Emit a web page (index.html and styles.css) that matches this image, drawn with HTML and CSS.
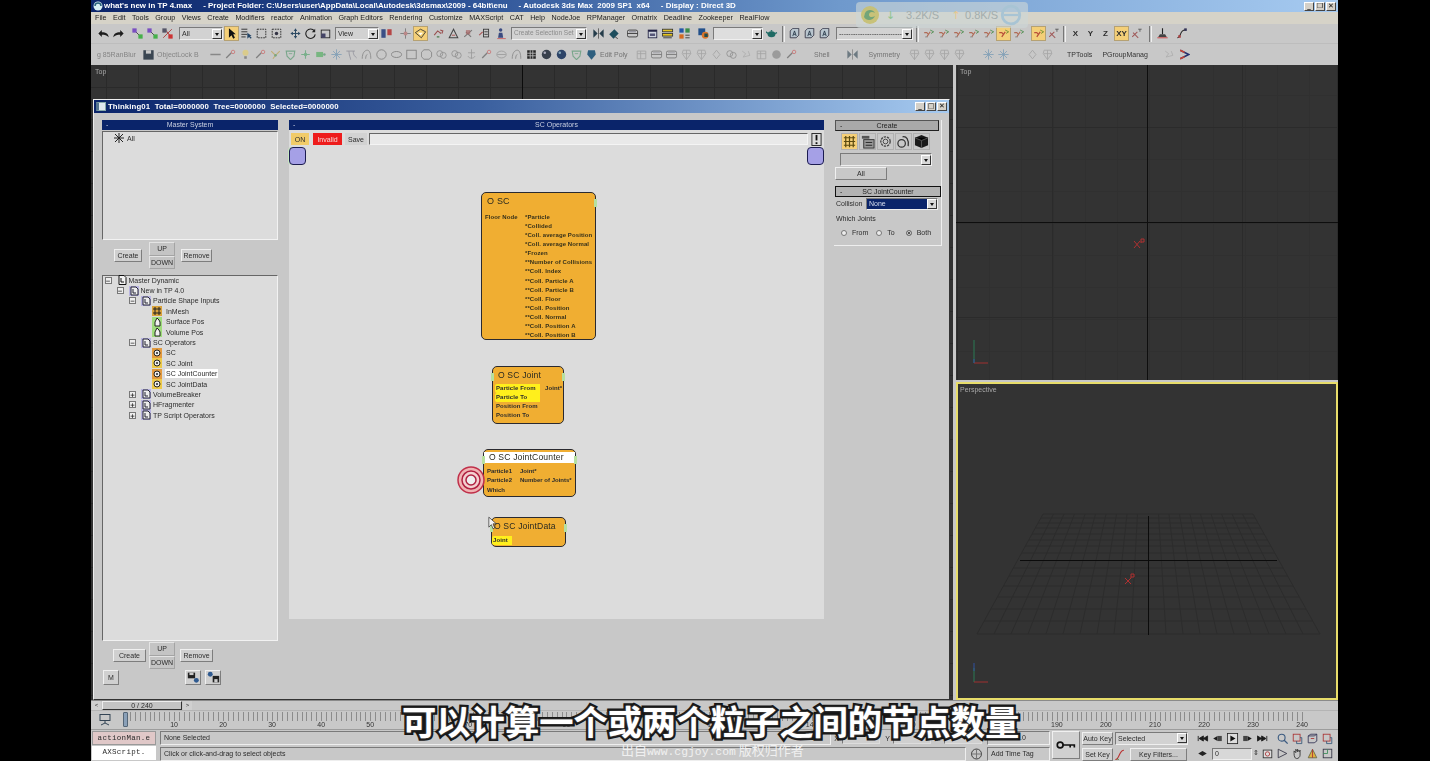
FILE: index.html
```html
<!DOCTYPE html>
<html lang="en">
<head>
<meta charset="utf-8">
<title>3ds Max - Thinking Particles</title>
<link rel="stylesheet" href="styles.css">
</head>
<body>
<svg class="defs" aria-hidden="true">
  <symbol id="undo" viewBox="0 0 14 14"><path d="M1 7 5 3v2.500c5 0 8 2 8 6-2-2.500-4.500-3-8-3V11Z" fill="#1c1c1c"/></symbol>
  <symbol id="redo" viewBox="0 0 14 14"><path d="M13 7 9 3v2.500c-5 0-8 2-8 6 2-2.500 4.500-3 8-3V11Z" fill="#1c1c1c"/></symbol>
  <symbol id="link" viewBox="0 0 14 14"><path d="M3 3l8 8" stroke="#333" fill="none"/><rect x="1" y="1" width="5" height="5" fill="#7a4fc0"/><rect x="8" y="8" width="5" height="5" fill="#46b04a"/></symbol>
  <symbol id="bind" viewBox="0 0 14 14"><path d="M2 12 12 2M4 2l8 10" stroke="#a33" fill="none"/><rect x="1" y="1" width="5" height="5" fill="#556"/><rect x="8" y="8" width="5" height="5" fill="#c33"/></symbol>
  <symbol id="arrow" viewBox="0 0 14 14"><path d="M4 1v11l3-3 2 4 2-1-2-4h3Z" fill="#111"/></symbol>
  <symbol id="names" viewBox="0 0 14 14"><path d="M1 2h7M1 5h7M1 8h7M1 11h5" stroke="#222"/><path d="M8 6v7l2-2 2 2 1-1-2-2h2Z" fill="#246"/></symbol>
  <symbol id="rect" viewBox="0 0 14 14"><rect x="2" y="2" width="10" height="10" fill="none" stroke="#222" stroke-dasharray="2 1"/></symbol>
  <symbol id="win" viewBox="0 0 14 14"><rect x="2" y="2" width="10" height="10" fill="none" stroke="#222" stroke-dasharray="2 1"/><circle cx="7" cy="7" r="2" fill="#334"/></symbol>
  <symbol id="move" viewBox="0 0 14 14"><path d="M7 1 5 4h1.400v2.400H4V5L1 7l3 2V7.600h2.400V10H5l2 3 2-3H7.600V7.600H10V9l3-2-3-2v1.400H7.600V4H9Z" fill="#2c4a63"/></symbol>
  <symbol id="rot" viewBox="0 0 14 14"><path d="M11.500 4A5.500 5.500 0 1 0 12.500 8" fill="none" stroke="#222" stroke-width="1.300"/><path d="M12.500 1.500v4h-4Z" fill="#222"/></symbol>
  <symbol id="scale" viewBox="0 0 14 14"><rect x="2" y="3" width="10" height="9" fill="none" stroke="#222"/><rect x="2" y="7" width="5" height="5" fill="#446"/></symbol>
  <symbol id="mir" viewBox="0 0 14 14"><rect x="1" y="2" width="5" height="10" fill="#3b4f86"/><rect x="8" y="2" width="5" height="7" fill="#b54646"/></symbol>
  <symbol id="snap" viewBox="0 0 14 14"><path d="M7 1v12M1 7h12" stroke="#777"/><path d="M5 5h4v4H5Z" fill="#b88"/></symbol>
  <symbol id="cubey" viewBox="0 0 14 14"><path d="M1 6 7 2l6 3-5 7Z" fill="#f5d070" stroke="#333"/><path d="M4 6h6L7 9Z" fill="#fff"/></symbol>
  <symbol id="red1" viewBox="0 0 14 14"><path d="M2 9 6 4l4 3M9 3l3 1-1 3" fill="none" stroke="#9a5050" stroke-width="1.300"/><path d="M5 11h3" stroke="#4a7a4a" stroke-width="1.500"/></symbol>
  <symbol id="red2" viewBox="0 0 14 14"><path d="M7 2 2 12h10Z" fill="none" stroke="#444" stroke-width="1.200"/><path d="M5 9h4" stroke="#a44"/></symbol>
  <symbol id="red3" viewBox="0 0 14 14"><path d="M2 11 11 3M4 5l6 6" stroke="#777" stroke-width="1.300"/><rect x="4" y="3" width="5" height="5" fill="#a66" opacity=".7"/></symbol>
  <symbol id="bars" viewBox="0 0 14 14"><path d="M2 9 6 5" stroke="#a55" stroke-width="1.300"/><rect x="7" y="2" width="6" height="9" fill="none" stroke="#333"/><path d="M8 5h4M8 8h4" stroke="#333"/></symbol>
  <symbol id="person" viewBox="0 0 14 14"><circle cx="6" cy="3" r="2" fill="#3a4a80"/><path d="M3 12 4 6h4l1 6Z" fill="#3a4a80"/><path d="M2 13h10" stroke="#c55"/></symbol>
  <symbol id="mirror" viewBox="0 0 14 14"><path d="M1 2v10l5-5ZM13 2v10L8 7Z" fill="#243c4a"/><path d="M7 1v12" stroke="#555"/></symbol>
  <symbol id="align" viewBox="0 0 14 14"><path d="M2 8 8 2l5 5-6 6Z" fill="#1d4d5d"/><path d="M9 11l3 2" stroke="#333"/></symbol>
  <symbol id="layer" viewBox="0 0 14 14"><rect x="1" y="3" width="12" height="8" fill="none" stroke="#333" rx="2"/><path d="M1 7h12" stroke="#333"/><path d="M3 5h8" stroke="#778"/></symbol>
  <symbol id="graph" viewBox="0 0 14 14"><rect x="2" y="3" width="10" height="9" fill="#cfd4de" stroke="#224"/><path d="M2 3h10v2H2Z" fill="#224"/><path d="M4 7h6v3H4Z" fill="#557"/></symbol>
  <symbol id="yellowb" viewBox="0 0 14 14"><rect x="1" y="2" width="12" height="3" fill="#e5c420" stroke="#333"/><rect x="1" y="7" width="12" height="3" fill="#e5c420" stroke="#333"/><path d="M2 12h10" stroke="#333"/></symbol>
  <symbol id="mat" viewBox="0 0 14 14"><rect x="1" y="1" width="5" height="5" fill="#2356a8"/><rect x="8" y="1" width="5" height="5" fill="#3a8c4a"/><rect x="1" y="8" width="5" height="5" fill="#d46a20"/><path d="M8 9h5M8 12h5" stroke="#333"/></symbol>
  <symbol id="render" viewBox="0 0 14 14"><rect x="1" y="1" width="8" height="8" fill="#22508a"/><circle cx="9" cy="9" r="4" fill="#d9742a"/><path d="M8 7h4v4H8Z" fill="#244c4a"/></symbol>
  <symbol id="teapot" viewBox="0 0 14 14"><ellipse cx="7" cy="8" rx="4.500" ry="3.500" fill="#1f6a64"/><path d="M3 7 .5 5M11 7l2.500-1" stroke="#1f6a64" stroke-width="1.500"/><circle cx="7" cy="3.800" r="1" fill="#1f6a64"/></symbol>
  <symbol id="tA" viewBox="0 0 14 14"><path d="M2 12V4l3-3h7v8l-3 3Z" fill="#b9c6cf" stroke="#334"/><path d="M5 10 7 4l2 6M6 8h2" stroke="#234" fill="none"/></symbol>
  <symbol id="axr" viewBox="0 0 14 14"><path d="M2 6h3l2 2M5 11l4-6" stroke="#b06a55" stroke-width="1.300" fill="none"/><path d="M9 3l4 2-3 2" stroke="#4a8a4a" fill="none"/><path d="M3 11h3" stroke="#888"/></symbol>
  <symbol id="axh" viewBox="0 0 14 14"><path d="M2 6h3l2 2M5 11l4-6" stroke="#b8503a" stroke-width="1.500" fill="none"/><path d="M9 3l4 2-3 2" stroke="#6a8a2a" fill="none"/></symbol>
  <symbol id="axy" viewBox="0 0 14 14"><path d="M2 11 8 5M3 6l6 6" stroke="#a05a5a" stroke-width="1.200"/><path d="M9 2h4M11 2v3" stroke="#555"/></symbol>
  <symbol id="fork" viewBox="0 0 14 14"><path d="M7 1v7" stroke="#222" stroke-width="1.300"/><path d="M4 8h6l2 3H2Z" fill="#444"/><path d="M1 12h12" stroke="#c33"/></symbol>
  <symbol id="curve" viewBox="0 0 14 14"><path d="M1 12c5 0 2-9 9-9" fill="none" stroke="#222" stroke-width="1.200"/><rect x="9" y="1" width="3" height="3" fill="#335"/><rect x="2" y="9" width="3" height="3" fill="#a44"/></symbol>
  <symbol id="save" viewBox="0 0 14 14"><rect x="1" y="2" width="12" height="11" fill="#3b4652"/><rect x="4" y="2" width="6" height="4" fill="#c8c8c8"/></symbol>
  <symbol id="dash" viewBox="0 0 14 14"><path d="M1 7h12" stroke="#555" stroke-width="1.500"/></symbol>
  <symbol id="tool" viewBox="0 0 14 14"><path d="M2 11 8 5" stroke="#444" stroke-width="1.500"/><circle cx="10" cy="4" r="2" fill="none" stroke="#c33"/></symbol>
  <symbol id="bulb" viewBox="0 0 14 14"><circle cx="7" cy="5" r="3.500" fill="#e9cf5a"/><rect x="5.500" y="9" width="3" height="3" fill="#555"/></symbol>
  <symbol id="ky" viewBox="0 0 14 14"><path d="M2 3l5 5-3 4M12 3 7 8" stroke="#b99a30" stroke-width="1.300" fill="none"/><circle cx="7" cy="8" r="1.500" fill="#3a8c4a"/></symbol>
  <symbol id="shield" viewBox="0 0 14 14"><path d="M2 3h10l-1 6-4 4-4-4Z" fill="none" stroke="#3a8c5a" stroke-width="1.300"/><path d="M5 6h4" stroke="#3a8c5a"/></symbol>
  <symbol id="grn" viewBox="0 0 14 14"><path d="M7 2v10M2 7h10" stroke="#3a9c5a" stroke-width="1.300"/><circle cx="7" cy="7" r="2" fill="#3a9c5a"/></symbol>
  <symbol id="cam" viewBox="0 0 14 14"><rect x="2" y="4" width="8" height="6" fill="#38a848"/><circle cx="11.500" cy="7" r="1.500" fill="#385"/></symbol>
  <symbol id="spk" viewBox="0 0 14 14"><path d="M7 1v12M1 7h12M3 3l8 8M11 3l-8 8" stroke="#4a80a8"/></symbol>
  <symbol id="coil" viewBox="0 0 14 14"><path d="M1 3h10M4 3c0 5 2 8 2 10M9 3c0 5 2 6 4 8" fill="none" stroke="#667"/></symbol>
  <symbol id="arc" viewBox="0 0 14 14"><path d="M2 12C2 5 5 2 8 2s4 5 4 10M6 12c0-3 1-5 2-5" fill="none" stroke="#555"/></symbol>
  <symbol id="circ" viewBox="0 0 14 14"><circle cx="7" cy="7" r="5.500" fill="none" stroke="#444"/></symbol>
  <symbol id="oval" viewBox="0 0 14 14"><ellipse cx="7" cy="7" rx="6" ry="3.500" fill="none" stroke="#444"/></symbol>
  <symbol id="sq" viewBox="0 0 14 14"><rect x="1.500" y="2" width="11" height="10" fill="none" stroke="#444"/></symbol>
  <symbol id="oct" viewBox="0 0 14 14"><path d="M4 1.500h6l3 3v5l-3 3H4l-3-3v-5Z" fill="none" stroke="#444"/></symbol>
  <symbol id="twin" viewBox="0 0 14 14"><circle cx="5" cy="6" r="3.500" fill="none" stroke="#666"/><circle cx="9" cy="8" r="3.500" fill="none" stroke="#666"/></symbol>
  <symbol id="anchor" viewBox="0 0 14 14"><path d="M7 1v11M3 5h8M3 9c1 3 7 3 8 0" fill="none" stroke="#777"/></symbol>
  <symbol id="ell" viewBox="0 0 14 14"><ellipse cx="7" cy="7" rx="5.500" ry="4" fill="none" stroke="#777"/><path d="M2 7h10" stroke="#777"/></symbol>
  <symbol id="cgrid" viewBox="0 0 14 14"><path d="M2 2h10v10H2Z" fill="#252525"/><path d="M2 5.500h10M2 8.500h10M5.500 2v10M8.500 2v10" stroke="#bbb"/></symbol>
  <symbol id="ball" viewBox="0 0 14 14"><circle cx="7" cy="7" r="5.500" fill="#38404c"/><circle cx="5" cy="5" r="1.500" fill="#aab"/></symbol>
  <symbol id="ballb" viewBox="0 0 14 14"><circle cx="7" cy="7" r="5.500" fill="#2d4468"/><circle cx="5" cy="5" r="1.500" fill="#8ab"/></symbol>
  <symbol id="teal" viewBox="0 0 14 14"><path d="M3 2h8l1 5-5 6-5-6Z" fill="#2e5f7f"/></symbol>
  <symbol id="cbox" viewBox="0 0 14 14"><path d="M2 3h10v9H2Z" fill="none" stroke="#888"/><path d="M2 6h10M6 3v9" stroke="#888"/></symbol>
  <symbol id="sphere" viewBox="0 0 14 14"><circle cx="7" cy="7" r="5" fill="#777"/></symbol>
  <symbol id="cone" viewBox="0 0 14 14"><path d="M7 2 3 7l4 5 4-5Z" fill="none" stroke="#888"/></symbol>
  <symbol id="ymov" viewBox="0 0 14 14"><path d="M3 2h8l1 4-5 7-5-7Z" fill="none" stroke="#8a8a8a"/><path d="M3 6h9M7 2v11" stroke="#8a8a8a"/></symbol>
  <symbol id="wave" viewBox="0 0 14 14"><path d="M2 3l4 3-3 4 8-2-2-5" stroke="#999" fill="none"/></symbol>
  <symbol id="chev" viewBox="0 0 14 14"><path d="M2 2 12 7 2 12" fill="none" stroke="#23306e" stroke-width="1.800"/><path d="M2 2 7 4.500M2 12l5-2.500" stroke="#c43" stroke-width="1.800"/></symbol>
  <symbol id="first" viewBox="0 0 14 14"><path d="M2 4v6M8 4 3 7l5 3ZM13 4 8 7l5 3Z" fill="#1b1b1b" stroke="#1b1b1b"/></symbol>
  <symbol id="prev" viewBox="0 0 14 14"><path d="M7 4 2 7l5 3Z" fill="#1b1b1b"/><rect x="7" y="4" width="5" height="6" fill="#444"/></symbol>
  <symbol id="next" viewBox="0 0 14 14"><path d="M7 4l5 3-5 3Z" fill="#1b1b1b"/><rect x="2" y="4" width="5" height="6" fill="#444"/></symbol>
  <symbol id="last" viewBox="0 0 14 14"><path d="M12 4v6M6 4l5 3-5 3ZM1 4l5 3-5 3Z" fill="#1b1b1b" stroke="#1b1b1b"/></symbol>
  <symbol id="play" viewBox="0 0 14 14"><rect x="1" y="1" width="12" height="12" fill="#ddd" stroke="#222"/><path d="M4.500 3.500v7l6-3.500Z" fill="#111"/></symbol>
  <symbol id="keym" viewBox="0 0 14 14"><path d="M7 4 2 7l5 3ZM7 4l5 3-5 3Z" fill="#222"/></symbol>
  <symbol id="cfg" viewBox="0 0 14 14"><rect x="2" y="3" width="10" height="9" fill="#ddd" stroke="#333"/><circle cx="7" cy="7.500" r="2.500" fill="none" stroke="#a33"/></symbol>
  <symbol id="zoom" viewBox="0 0 14 14"><circle cx="6" cy="6" r="4" fill="none" stroke="#3a5a80" stroke-width="1.300"/><path d="m9 9 4 4" stroke="#3a5a80" stroke-width="1.500"/></symbol>
  <symbol id="vbr" viewBox="0 0 14 14"><rect x="2" y="2" width="8" height="8" fill="none" stroke="#a33"/><path d="M6 10v3h6V6h-2" fill="none" stroke="#357"/></symbol>
  <symbol id="vbc" viewBox="0 0 14 14"><path d="M2 4h7l3-2v8l-3 2H2Z" fill="none" stroke="#335"/><path d="M2 4l3-2h7" stroke="#335" fill="none"/><path d="M5 7h4" stroke="#a33"/></symbol>
  <symbol id="fov" viewBox="0 0 14 14"><path d="M2 2 12 7 2 12Z" fill="none" stroke="#334"/></symbol>
  <symbol id="hand" viewBox="0 0 14 14"><path d="M3 7V4l2 2V2l2 3V2l2 3 1-2v6c0 2-2 4-4 4S3 10 3 7Z" fill="none" stroke="#333"/></symbol>
  <symbol id="orb" viewBox="0 0 14 14"><path d="M7 2 2 12h10Z" fill="#e0b040" stroke="#664"/><path d="M7 2v10" stroke="#a33"/></symbol>
  <symbol id="maxv" viewBox="0 0 14 14"><rect x="2" y="2" width="10" height="10" fill="none" stroke="#334"/><path d="M2 7h5V2" fill="none" stroke="#3a8c5a"/></symbol>
  <symbol id="key" viewBox="0 0 24 12"><circle cx="5" cy="6" r="3.500" fill="none" stroke="#111" stroke-width="2"/><path d="M8 6h14v3M17 6v3" fill="none" stroke="#111" stroke-width="2"/></symbol>
  <symbol id="lock" viewBox="0 0 14 14"><circle cx="7" cy="7" r="5" fill="none" stroke="#444"/><path d="M7 2v10M2 7h10" stroke="#777"/></symbol>
  <symbol id="fcurve" viewBox="0 0 14 14"><path d="M1 13c5 0 4-11 10-11" fill="none" stroke="#b33" stroke-width="1.300"/><path d="M3 12l2 1" stroke="#383"/></symbol>
  <symbol id="monitor" viewBox="0 0 14 14"><rect x="2" y="1.500" width="10" height="6" fill="none" stroke="#345"/><path d="M7 8v2M3 12l4-2 4 2" stroke="#345" fill="none"/></symbol>
  <symbol id="tdoc" viewBox="0 0 10 10"><rect width="10" height="10" fill="#b8b4e0"/><path d="M2 1h5l2 2v6H2Z" fill="#eee" stroke="#223"/><path d="M4 3v4h3" stroke="#223" fill="none"/></symbol>
  <symbol id="troot" viewBox="0 0 10 10"><path d="M2 .5h5l2 2v7H2Z" fill="#f2f2f2" stroke="#111"/><path d="M4 3v4h3" stroke="#111" fill="none"/></symbol>
  <symbol id="tgear" viewBox="0 0 10 10"><rect width="10" height="10" fill="#ecc94a"/><circle cx="5" cy="5" r="3" fill="#eee" stroke="#222"/><circle cx="5" cy="5" r="1" fill="#222"/></symbol>
  <symbol id="tgearo" viewBox="0 0 10 10"><rect width="10" height="10" fill="#e39a3e"/><circle cx="5" cy="5" r="3" fill="#eee" stroke="#222"/><circle cx="5" cy="5" r="1" fill="#222"/></symbol>
  <symbol id="thand" viewBox="0 0 10 10"><rect width="10" height="10" fill="#9fdc7c"/><path d="M3 9V5l2-4 2 2 1 2v4Z" fill="#f2f2f2" stroke="#222"/></symbol>
  <symbol id="tmesh" viewBox="0 0 10 10"><rect width="10" height="10" fill="#d9a23c"/><path d="M1 3h8M1 7h8M3 1v8M7 1v8" stroke="#222"/></symbol>
  <symbol id="cmesh" viewBox="0 0 16 16"><path d="M4 2v12M8 2v12M12 2v12M2 4h12M2 8h12M2 12h12" stroke="#5a4a10" stroke-width="1.300"/></symbol>
  <symbol id="cok" viewBox="0 0 16 16"><path d="M2 2h8v3H2Z" fill="#555"/><rect x="4" y="6" width="11" height="9" fill="#999" stroke="#333"/><path d="M6 9h7M6 12h7" stroke="#222"/></symbol>
  <symbol id="cgear" viewBox="0 0 16 16"><circle cx="8" cy="8" r="5" fill="none" stroke="#444" stroke-width="1.400" stroke-dasharray="2.500 1"/><circle cx="8" cy="8" r="2.500" fill="none" stroke="#444"/></symbol>
  <symbol id="cmag" viewBox="0 0 16 16"><circle cx="6" cy="10" r="4" fill="none" stroke="#333" stroke-width="1.300"/><path d="M7 3c4-1 7 3 6 10" fill="none" stroke="#333" stroke-width="1.300"/></symbol>
  <symbol id="ccube" viewBox="0 0 16 16"><path d="M8 1 15 4v8l-7 3-7-3V4Z" fill="#1a1a1a"/><path d="M1 4l7 3 7-3M8 7v8" stroke="#555"/></symbol>
  <symbol id="floppyb" viewBox="0 0 16 16"><rect x="1" y="2" width="9" height="7" fill="#222"/><rect x="3" y="2" width="5" height="3" fill="#ccc"/><circle cx="11.500" cy="11.500" r="3" fill="#2f5a90"/></symbol>
  <symbol id="floppya" viewBox="0 0 16 16"><circle cx="4" cy="4" r="3" fill="#2f5a90"/><rect x="7" y="6" width="8" height="8" fill="#222"/><rect x="9" y="10" width="4" height="4" fill="#ccc"/></symbol>
  <symbol id="bang" viewBox="0 0 12 14"><rect x="1" y="0.500" width="10" height="13" fill="#ddd" stroke="#222"/><path d="M6 2v6" stroke="#111" stroke-width="2"/><rect x="5" y="10" width="2" height="2" fill="#111"/></symbol>
</svg>

<div class="app">
  <header class="title">
    <svg class="ttl-ico" viewBox="0 0 10 10"><circle cx="5" cy="5" r="4.500" fill="#d8f0f4"/><path d="M2 5a3 3 0 0 1 6 0" fill="none" stroke="#26607a" stroke-width="1.500"/></svg>
    <span class="ttl-text">what's new in TP 4.max &nbsp;&nbsp;&nbsp; - Project Folder: C:\Users\user\AppData\Local\Autodesk\3dsmax\2009 - 64bit\enu &nbsp;&nbsp;&nbsp; - Autodesk 3ds Max &nbsp;2009 SP1 &nbsp;x64 &nbsp;&nbsp;&nbsp; - Display : Direct 3D</span>
    <div class="wbtns"><b>_</b><b>❐</b><b>✕</b></div>
  </header>
  <nav class="menu">
    <span>File</span><span>Edit</span><span>Tools</span><span>Group</span><span>Views</span><span>Create</span><span>Modifiers</span><span>reactor</span><span>Animation</span><span>Graph Editors</span><span>Rendering</span><span>Customize</span><span>MAXScript</span><span>CAT</span><span>Help</span><span>NodeJoe</span><span>RPManager</span><span>Ornatrix</span><span>Deadline</span><span>Zookeeper</span><span>RealFlow</span>
  </nav>

  <div class="tb tb1">
    <svg class="ic"><use href="#undo"/></svg><svg class="ic"><use href="#redo"/></svg>
    <svg class="ic g4"><use href="#link"/></svg><svg class="ic"><use href="#link"/></svg><svg class="ic"><use href="#bind"/></svg>
    <div class="dd g4 w44"><span>All</span><i></i></div>
    <svg class="ic g1 on"><use href="#arrow"/></svg><svg class="ic"><use href="#names"/></svg><svg class="ic"><use href="#rect"/></svg><svg class="ic"><use href="#win"/></svg>
    <svg class="ic g4"><use href="#move"/></svg><svg class="ic"><use href="#rot"/></svg><svg class="ic"><use href="#scale"/></svg>
    <div class="dd g2 w44"><span>View</span><i></i></div>
    <svg class="ic"><use href="#mir"/></svg>
    <svg class="ic g4"><use href="#snap"/></svg><svg class="ic on"><use href="#cubey"/></svg>
    <svg class="ic g3"><use href="#red1"/></svg><svg class="ic"><use href="#red2"/></svg><svg class="ic"><use href="#red3"/></svg><svg class="ic"><use href="#bars"/></svg>
    <svg class="ic g3"><use href="#person"/></svg>
    <div class="dd g2 w76 faded"><span>Create Selection Set</span><i></i></div>
    <svg class="ic g4"><use href="#mirror"/></svg><svg class="ic"><use href="#align"/></svg>
    <svg class="ic g4"><use href="#layer"/></svg>
    <svg class="ic g5"><use href="#graph"/></svg><svg class="ic"><use href="#yellowb"/></svg>
    <svg class="ic g2"><use href="#mat"/></svg>
    <svg class="ic g4"><use href="#render"/></svg>
    <div class="dd g2 w50 blank"><span></span><i></i></div>
    <svg class="ic g1"><use href="#teapot"/></svg>
    <i class="grip g3"></i><svg class="ic g2"><use href="#tA"/></svg><svg class="ic"><use href="#tA"/></svg><svg class="ic"><use href="#tA"/></svg>
    <div class="dd g4 w77"><span>---------------------------</span><i></i></div>
    <i class="grip g3"></i><svg class="ic g2"><use href="#axr"/></svg><svg class="ic"><use href="#axr"/></svg><svg class="ic"><use href="#axr"/></svg><svg class="ic"><use href="#axr"/></svg><svg class="ic"><use href="#axr"/></svg><svg class="ic on"><use href="#axh"/></svg><svg class="ic"><use href="#axr"/></svg>
    <svg class="ic g5 on"><use href="#axh"/></svg><svg class="ic"><use href="#axy"/></svg>
    <i class="grip g2"></i><span class="axis g2">X</span><span class="axis">Y</span><span class="axis">Z</span><span class="axis on g1">XY</span><svg class="ic"><use href="#axy"/></svg>
    <i class="grip g5"></i><svg class="ic g3"><use href="#fork"/></svg><svg class="ic g5"><use href="#curve"/></svg>
  </div>

  <div class="tb tb2">
    <span class="tl t-a">g 85RanBlur</span>
    <svg class="ic solid"><use href="#save"/></svg>
    <span class="tl t-b">ObjectLock B</span>
    <svg class="ic"><use href="#dash"/></svg><svg class="ic"><use href="#tool"/></svg><svg class="ic"><use href="#bulb"/></svg><svg class="ic"><use href="#tool"/></svg><svg class="ic"><use href="#ky"/></svg><svg class="ic"><use href="#shield"/></svg><svg class="ic"><use href="#grn"/></svg><svg class="ic"><use href="#cam"/></svg><svg class="ic g1"><use href="#spk"/></svg><svg class="ic"><use href="#coil"/></svg><svg class="ic"><use href="#arc"/></svg><svg class="ic"><use href="#circ"/></svg><svg class="ic"><use href="#oval"/></svg><svg class="ic"><use href="#sq"/></svg><svg class="ic"><use href="#oct"/></svg><svg class="ic"><use href="#twin"/></svg><svg class="ic"><use href="#twin"/></svg><svg class="ic"><use href="#anchor"/></svg><svg class="ic"><use href="#tool"/></svg><svg class="ic"><use href="#ell"/></svg><svg class="ic"><use href="#arc"/></svg>
    <svg class="ic solid"><use href="#cgrid"/></svg><svg class="ic solid"><use href="#ball"/></svg><svg class="ic solid"><use href="#ballb"/></svg><svg class="ic"><use href="#shield"/></svg><svg class="ic solid"><use href="#teal"/></svg>
    <span class="tl t-c">Edit Poly</span>
    <svg class="ic"><use href="#cbox"/></svg><svg class="ic"><use href="#layer"/></svg><svg class="ic"><use href="#layer"/></svg><svg class="ic"><use href="#ymov"/></svg><svg class="ic"><use href="#ymov"/></svg><svg class="ic"><use href="#cone"/></svg><svg class="ic"><use href="#twin"/></svg><svg class="ic"><use href="#wave"/></svg><svg class="ic"><use href="#cbox"/></svg><svg class="ic"><use href="#sphere"/></svg><svg class="ic"><use href="#tool"/></svg>
    <span class="tl t-d">Shell</span>
    <svg class="ic"><use href="#mirror"/></svg>
    <span class="tl t-e">Symmetry</span>
    <svg class="ic"><use href="#ymov"/></svg><svg class="ic"><use href="#ymov"/></svg><svg class="ic"><use href="#ymov"/></svg><svg class="ic"><use href="#ymov"/></svg>
    <svg class="ic g14"><use href="#spk"/></svg><svg class="ic"><use href="#spk"/></svg>
    <svg class="ic g14"><use href="#cone"/></svg><svg class="ic"><use href="#ymov"/></svg>
    <span class="tl t-f">TPTools</span><span class="tl t-g">PGroupManag</span>
    <svg class="ic g14"><use href="#wave"/></svg><svg class="ic solid"><use href="#chev"/></svg>
  </div>

  <main class="views">
    <section class="vp vp-main">
      <span class="vp-label">Top</span>
      <article class="win">
        <header class="win-title">
          <span class="win-ico"></span>
          <span>Thinking01 &nbsp;Total=0000000 &nbsp;Tree=0000000 &nbsp;Selected=0000000</span>
          <div class="wbtns"><b>_</b><b>□</b><b>✕</b></div>
        </header>
        <div class="win-body">
          <div class="col-l">
            <div class="navy"><b>-</b><span>Master System</span></div>
            <div class="list sys">
              <div class="row lv1"><svg class="star" viewBox="0 0 10 10"><path d="M5 0v10M0 5h10M1 1l8 8M9 1l-8 8" stroke="#222" fill="none"/></svg><span>All</span></div>
            </div>
            <div class="btngrp">
              <button class="btn bw28">Create</button>
              <div class="updown"><button class="btn flat">UP</button><button class="btn flat">DOWN</button></div>
              <button class="btn bw31">Remove</button>
            </div>
            <div class="list tree">
              <div class="row l0"><i class="ex">−</i><svg class="ti"><use href="#troot"/></svg><span>Master Dynamic</span></div>
              <div class="row l1"><i class="ex">−</i><svg class="ti"><use href="#tdoc"/></svg><span>New in TP 4.0</span></div>
              <div class="row l2"><i class="ex">−</i><svg class="ti"><use href="#tdoc"/></svg><span>Particle Shape Inputs</span></div>
              <div class="row leaf"><svg class="ti"><use href="#tmesh"/></svg><span>InMesh</span></div>
              <div class="row leaf"><svg class="ti"><use href="#thand"/></svg><span>Surface Pos</span></div>
              <div class="row leaf"><svg class="ti"><use href="#thand"/></svg><span>Volume Pos</span></div>
              <div class="row l2"><i class="ex">−</i><svg class="ti"><use href="#tdoc"/></svg><span>SC Operators</span></div>
              <div class="row leaf"><svg class="ti"><use href="#tgearo"/></svg><span>SC</span></div>
              <div class="row leaf"><svg class="ti"><use href="#tgear"/></svg><span>SC Joint</span></div>
              <div class="row leaf"><svg class="ti"><use href="#tgearo"/></svg><span class="sel">SC JointCounter</span></div>
              <div class="row leaf"><svg class="ti"><use href="#tgear"/></svg><span>SC JointData</span></div>
              <div class="row l2"><i class="ex">+</i><svg class="ti"><use href="#tdoc"/></svg><span>VolumeBreaker</span></div>
              <div class="row l2"><i class="ex">+</i><svg class="ti"><use href="#tdoc"/></svg><span>HFragmenter</span></div>
              <div class="row l2"><i class="ex">+</i><svg class="ti"><use href="#tdoc"/></svg><span>TP Script Operators</span></div>
            </div>
            <div class="btngrp grp2">
              <button class="btn bw32">Create</button>
              <div class="updown"><button class="btn flat">UP</button><button class="btn flat">DOWN</button></div>
              <button class="btn bw32 r">Remove</button>
            </div>
            <div class="foot-tools">
              <button class="btn sq">M</button>
              <button class="btn sq s1"><svg class="fl"><use href="#floppyb"/></svg></button>
              <button class="btn sq s2"><svg class="fl"><use href="#floppya"/></svg></button>
            </div>
          </div>

          <div class="col-m">
            <div class="navy"><b>-</b><span>SC Operators</span></div>
            <div class="canvas">
              <div class="ctl">
                <button class="chip on">ON</button>
                <button class="chip bad">Invalid</button>
                <button class="chip">Save</button>
                <div class="ctl-in"></div>
                <svg class="bang"><use href="#bang"/></svg>
              </div>
              <div class="pnode pl"></div>
              <div class="pnode pr"></div>

              <div class="node n-sc">
                <div class="nh">O SC</div>
                <div class="sc-cols">
                  <div>Floor Node</div>
                  <div class="sc-list">
                    <div>*Particle</div><div>*Collided</div><div>*Coll. average Position</div><div>*Coll. average Normal</div><div>*Frozen</div><div>**Number of Collisions</div><div>**Coll. Index</div><div>**Coll. Particle A</div><div>**Coll. Particle B</div><div>**Coll. Floor</div><div>**Coll. Position</div><div>**Coll. Normal</div><div>**Coll. Position A</div><div>**Coll. Position B</div>
                  </div>
                </div>
              </div>

              <div class="node n-joint pin">
                <div class="nh">O SC Joint</div>
                <div class="nr"><span class="y">Particle From</span><span>Joint*</span></div>
                <div class="nr"><span class="y">Particle To</span></div>
                <div class="nr"><span class="p">Position From</span></div>
                <div class="nr"><span class="p">Position To</span></div>
              </div>

              <div class="node n-count pin">
                <div class="nh wh">O SC JointCounter</div>
                <div class="cr"><span>Particle1</span><span>Joint*</span></div>
                <div class="cr"><span>Particle2</span><span>Number of Joints*</span></div>
                <div class="cr"><span>Which</span></div>
              </div>

              <div class="node n-data pin">
                <div class="nh">O SC JointData</div>
                <div class="nr"><span class="y short">Joint</span></div>
              </div>

              <svg class="target" viewBox="0 0 28 28"><circle cx="14" cy="14" r="13" fill="#f0b4b4" stroke="#c0304a" stroke-width="1.500"/><circle cx="14" cy="14" r="9" fill="#f4d0d0" stroke="#b02040" stroke-width="1.500"/><circle cx="14" cy="14" r="5" fill="#eee" stroke="#b02040" stroke-width="1.500"/></svg>
              <svg class="cursor" viewBox="0 0 12 16"><path d="M1 1v12l3-3 2 5 2-1-2-5h4Z" fill="#f4f4f4" stroke="#222" stroke-width=".8"/></svg>
            </div>
          </div>

          <div class="col-r">
            <div class="roll-h"><b>-</b><span>Create</span></div>
            <div class="cmd-icons">
              <svg class="ci on"><use href="#cmesh"/></svg><svg class="ci"><use href="#cok"/></svg><svg class="ci"><use href="#cgear"/></svg><svg class="ci"><use href="#cmag"/></svg><svg class="ci"><use href="#ccube"/></svg>
            </div>
            <div class="dd dd-create"><span></span><i></i></div>
            <button class="btn all">All</button>
            <div class="roll-h dark"><b>-</b><span>SC JointCounter</span></div>
            <div class="coll"><span>Collision</span><div class="dd sel-dd"><span>None</span><i></i></div></div>
            <div class="which">Which Joints</div>
            <div class="radios">
              <label><i class="rd"></i>From</label><label><i class="rd"></i>To</label><label><i class="rd chk"></i>Both</label>
            </div>
          </div>
        </div>
      </article>
    </section>

    <div class="vp-col">
      <section class="vp vp-top">
        <span class="vp-label">Top</span>
        <svg class="scene" viewBox="956 65 382 315">
          <path d="M1147.500 65V380M956 222.500H1338" stroke="#0e0e0e" fill="none"/>
          <path d="M1134 248l6-7m-6 0 6 7" stroke="#b03030" fill="none"/><path d="M1141 243v-4h3v3h-3" stroke="#b03030" fill="none"/>
          <path d="M974 363v-23" stroke="#2a7a55"/><path d="M974 363h14" stroke="#a03030"/><path d="M974 363v-4" stroke="#3050a0"/>
        </svg>
      </section>
      <section class="vp vp-persp">
        <span class="vp-label">Perspective</span>
        <svg class="scene" viewBox="958 383 378 314">
          <path d="M1043 513H1253M1041 517H1255M1038 522H1258M1035 527H1261M1032 533H1264M1029 539H1268M1025 545H1271M1022 552H1275M1013 567H1283M1009 575H1288M1003 585H1293M997 596H1299M991 608H1306M984 620H1313M977 633H1320" stroke="#2c2c2c" fill="none"/>
          <path d="M1043 513L977 633M1053.500 513L994 633M1064 513L1011 633M1074.500 513L1028 633M1085 513L1046 633M1095.500 513L1063 633M1106 513L1080 633M1116.500 513L1097 633M1127 513L1114 633M1137.500 513L1131 633M1158.500 513L1166 633M1169 513L1183 633M1179.500 513L1200 633M1190 513L1217 633M1200.500 513L1234 633M1211 513L1251 633M1221.500 513L1269 633M1232 513L1286 633M1242.500 513L1303 633M1253 513L1320 633" stroke="#2c2c2c" fill="none"/>
          <path d="M1020 559.500H1277M1148.500 515V634" stroke="#0b0b0b" fill="none"/>
          <path d="M1125 583l6-6m-6 0 6 6" stroke="#b03030" fill="none"/><path d="M1131 577v-4h3v3h-3" stroke="#b03030" fill="none"/>
          <path d="M974 681v-14" stroke="#2a7a55"/><path d="M974 681h14" stroke="#a03030"/><path d="M974 670v-8" stroke="#3050a0"/>
        </svg>
      </section>
    </div>
  </main>

  <div class="slider">
    <button class="sbtn">&lt;</button>
    <div class="thumb">0 / 240</div>
    <button class="sbtn">&gt;</button>
  </div>
  <div class="ruler">
    <svg class="mon"><use href="#monitor"/></svg>
    <div class="ruler-main">
      <i class="cur"></i>
      <div class="ticks"></div>
      <div class="nums"><span>10</span><span>20</span><span>30</span><span>40</span><span>50</span><span>60</span><span>70</span><span>80</span><span>90</span><span>100</span><span>110</span><span>120</span><span>130</span><span>140</span><span>150</span><span>160</span><span>170</span><span>180</span><span>190</span><span>200</span><span>210</span><span>220</span><span>230</span><span>240</span></div>
    </div>
  </div>

  <footer class="status">
    <div class="scripts"><div class="sc1">actionMan.e</div><div class="sc2">AXScript.</div></div>
    <div class="stat">
      <div class="stat-row">
        <div class="field grow">None Selected</div>
        <span class="xyz">X</span><div class="coord"></div>
        <span class="xyz">Y</span><div class="coord"></div>
        <span class="xyz">Z</span><div class="coord"></div>
        <div class="field gridv">Grid = 10.0</div>
      </div>
      <div class="stat-row r2">
        <div class="field grow">Click or click-and-drag to select objects</div>
        <svg class="lock"><use href="#lock"/></svg>
        <div class="field gridv">Add Time Tag</div>
      </div>
    </div>
    <button class="btn keybtn"><svg class="keyi"><use href="#key"/></svg></button>
    <div class="akey">
      <div class="ak-row"><button class="btn ab">Auto Key</button><div class="dd ak-dd"><span>Selected</span><i></i></div></div>
      <div class="ak-row"><button class="btn ab">Set Key</button><svg class="ic"><use href="#fcurve"/></svg><button class="btn kf">Key Filters...</button></div>
    </div>
    <div class="trans">
      <div class="tr-row"><svg class="ic"><use href="#first"/></svg><svg class="ic"><use href="#prev"/></svg><svg class="ic"><use href="#play"/></svg><svg class="ic"><use href="#next"/></svg><svg class="ic"><use href="#last"/></svg></div>
      <div class="tr-row"><svg class="ic"><use href="#keym"/></svg><div class="frame">0</div><span class="spin">⇕</span><svg class="ic"><use href="#cfg"/></svg></div>
    </div>
    <div class="nav">
      <svg class="ic"><use href="#zoom"/></svg><svg class="ic"><use href="#vbr"/></svg><svg class="ic"><use href="#vbc"/></svg><svg class="ic"><use href="#vbr"/></svg>
      <svg class="ic"><use href="#fov"/></svg><svg class="ic"><use href="#hand"/></svg><svg class="ic"><use href="#orb"/></svg><svg class="ic"><use href="#maxv"/></svg>
    </div>
  </footer>
</div>

<div class="net">
  <svg class="net-logo" viewBox="0 0 20 20"><circle cx="10" cy="10" r="9" fill="#c8c070"/><path d="M5 8c2-4 8-4 10 0-3-2-6-1-6 2 0 2 3 3 6 1-2 5-9 5-11 1" fill="#6aa070"/></svg>
  <span class="ar-g">↓</span><span>3.2K/S</span><span class="ar-o">↑</span><span>0.8K/S</span>
  <svg class="net-e" viewBox="0 0 20 20"><circle cx="10" cy="10" r="8" fill="none" stroke="#a8c4d4" stroke-width="2.500"/><path d="M3 10h14" stroke="#a8c4d4" stroke-width="2"/></svg>
</div>
<div class="subtitle">可以计算一个或两个粒子之间的节点数量</div>
<div class="wm">出自<span>www.cgjoy.com</span> 版权归作者</div>
</body>
</html>
```
FILE: styles.css
```css
* { box-sizing: border-box; }
html, body { margin: 0; height: 761px; overflow: hidden; }
body { background: #000; font: 7px/1 "Liberation Sans", Arial, sans-serif; color: #2c2c2c; position: relative; }
.defs { display: none; }
button { font: inherit; color: inherit; padding: 0; margin: 0; white-space: nowrap; }

.app { width: 1247px; height: 761px; margin-left: 91px; background: #c8c8c8; display: flex; flex-direction: column; filter: blur(.35px); }

/* title + menu */
.title { height: 12px; flex: none; display: flex; align-items: center; padding-left: 2px; background: linear-gradient(90deg, #0a246a 0, #2e5397 30%, #6f99cc 60%, #a6caf0 100%); color: #fff; font-weight: 700; font-size: 7.950px; }
.ttl-ico { width: 10px; height: 10px; margin-right: 1px; }
.ttl-text { white-space: nowrap; }
.wbtns { margin-left: auto; display: flex; gap: 1px; padding-right: 2px; }
.wbtns b { width: 10px; height: 9px; background: #d4d0c8; border: 1px solid; border-color: #fff #444 #444 #fff; color: #111; font: 700 7px/7px "DejaVu Sans", sans-serif; text-align: center; overflow: hidden; }
.menu { height: 12px; flex: none; display: flex; gap: 6.500px; align-items: center; padding-left: 4px; background: #d6d3c8; font-size: 7.200px; color: #1b1b1b; }

/* toolbars */
.tb { height: 20px; flex: none; display: flex; align-items: center; background: #c8c8c8; white-space: nowrap; }
.tb1 { padding-left: 5px; border-bottom: 1px solid #bdbdbd; }
.tb2 { padding-left: 6px; }
.ic { width: 15px; height: 15px; padding: 1.500px; flex: none; display: block; }
.ic.on { background: #f4cf78; box-shadow: inset 0 0 0 1px #b5a173; }
.tb2 .ic { opacity: .55; }
.tb2 .ic.solid { opacity: 1; }
.g1 { margin-left: 1px; } .g2 { margin-left: 2px; } .g3 { margin-left: 3px; } .g4 { margin-left: 4px; } .g5 { margin-left: 5px; } .g14 { margin-left: 14px; }
.grip { width: 3px; height: 16px; flex: none; border-left: 1px solid #777; border-right: 1px solid #f0f0f0; }
.dd { height: 13px; display: flex; align-items: center; background: #d2d2d2; border: 1px solid; border-color: #7a7a7a #efefef #efefef #7a7a7a; padding-left: 2px; flex: none; overflow: hidden; white-space: nowrap; }
.dd span { flex: 1; overflow: hidden; min-width: 0; }
.dd i { width: 10px; height: 10px; flex: none; background: #d8d8d8; border: 1px solid; border-color: #fff #333 #333 #fff; position: relative; }
.dd i::after { content: ""; position: absolute; left: 2px; top: 3px; border: 2px solid transparent; border-top: 3px solid #111; border-bottom: 0; }
.w44 { width: 44px; } .w50 { width: 50px; } .w76 { width: 76px; } .w77 { width: 77px; }
.faded { color: #8a8a8a; font-size: 6.500px; }
.blank { background: #dedede; }
.axis { width: 15px; height: 15px; font: 700 8px/15px "Liberation Sans", sans-serif; text-align: center; flex: none; }
.axis.on { background: #f4cf78; box-shadow: inset 0 0 0 1px #b5a173; }
.tl { color: #737373; font-size: 7px; flex: none; }
.t-a { width: 44px; color: #858585; } .t-b { width: 52px; padding-left: 1px; color: #858585; }
.t-c { margin: 0 8px 0 1px; width: 26px; } .t-d { margin: 0 15px; } .t-e { margin: 0 7px 0 9px; } .t-f { margin-left: 12px; color: #333; } .t-g { margin-left: 10px; color: #333; }

/* viewports */
.views { flex: 1; min-height: 0; display: flex; gap: 3px; padding-top: 1px; }
.vp { background-color: #333; position: relative; overflow: hidden; }
.vp-main { width: 862px; flex: none; background-image: linear-gradient(90deg, #0b0b0b 1px, transparent 1px), linear-gradient(90deg, #2a2a2a 1px, transparent 1px), linear-gradient(#2a2a2a 1px, transparent 1px); background-size: 2000px 100%, 32px 100%, 100% 32px; background-position: 431px 0, 15px 0, 0 22px; background-repeat: no-repeat, repeat, repeat; }
.vp-col { flex: 1; display: flex; flex-direction: column; gap: 2px; }
.vp-top { height: 315px; flex: none; background-image: linear-gradient(90deg, #2b2b2b 1px, transparent 1px), linear-gradient(#2b2b2b 1px, transparent 1px), linear-gradient(90deg, #303030 1px, transparent 1px), linear-gradient(#303030 1px, transparent 1px); background-size: 95px 100%, 100% 95px, 32px 100%, 100% 32px; background-position: 1px 0, 0 62px, 1px 0, 0 30px; }
.vp-persp { flex: 1; min-height: 0; border: 2px solid #e8dd6a; }
.vp-label { position: absolute; left: 4px; top: 3px; color: #a8a8a8; font-size: 7px; z-index: 1; }
.vp-persp .vp-label { left: 2px; top: 2px; }
.scene { display: block; width: 100%; height: 100%; }

/* floating window */
.win { position: absolute; left: 2px; top: 34px; width: 857px; height: 601px; background: #c8c8c8; border: 1px solid; border-color: #eee #333 #333 #eee; display: flex; flex-direction: column; }
.win-title { height: 13px; flex: none; display: flex; align-items: center; padding-left: 2px; background: linear-gradient(90deg, #0a246a, #3a5f9e 45%, #a6caf0); color: #fff; font: 700 7.800px "Liberation Sans", sans-serif; letter-spacing: .1px; }
.win-ico { width: 10px; height: 9px; background: #dfe8f0; border: 1px solid #8aa; margin-right: 2px; border-left: 3px solid #55758f; }
.win-body { flex: 1; min-height: 0; display: flex; padding: 7px 0 0 8px; }
.col-l { width: 176px; margin-right: 11px; display: flex; flex-direction: column; flex: none; }
.navy { height: 10px; background: #0a246a; color: #c8cfe0; position: relative; text-align: center; line-height: 10px; flex: none; }
.navy b, .roll-h b { position: absolute; left: 4px; top: 0; font-weight: 400; }
.list { background: #dcdcdc; border: 1px solid; border-color: #666 #f2f2f2 #f2f2f2 #666; margin-top: 1px; flex: none; }
.sys { height: 109px; padding-top: 1px; }
.tree { height: 366px; margin-top: 6px; padding-top: 0; }
.tree .row:first-child { margin-top: -1px; }
.row { height: 10.400px; display: flex; align-items: center; white-space: nowrap; }
.lv1 { padding-left: 11px; }
.star { width: 10px; height: 10px; margin-right: 3px; }
.ex { width: 7px; height: 7px; background: #eee; border: 1px solid #777; font: 700 6px/5px "DejaVu Sans", sans-serif; text-align: center; color: #222; margin-right: 4px; flex: none; }
.ti { width: 10px; height: 10px; margin-right: 2px; flex: none; }
.l0 { padding-left: 1.500px; } .l1 { padding-left: 13.500px; } .l2 { padding-left: 26px; }
.l0 .ti, .l1 .ti, .l2 .ti { margin-left: 1px; }
.leaf { padding-left: 49px; }
.leaf .ti { margin-right: 4px; }
.sel { background: #fff; padding: 1px; margin-left: -1px; }
.btngrp { height: 27px; margin-top: 2px; display: flex; align-items: center; padding-left: 12px; flex: none; }
.btn { background: #d0d0d0; border: 1px solid; border-color: #f0f0f0 #7d7d7d #7d7d7d #f0f0f0; text-align: center; }
.btn.flat { display: block; width: 26px; height: 13.500px; background: #c4c4c4; border-color: #e4e4e4 #a4a4a4 #a4a4a4 #e4e4e4; }
.bw28 { width: 28px; height: 13px; } .bw31 { width: 31px; height: 13px; margin-left: 6px; }
.updown { margin-left: 7px; }
.grp2 { margin-top: 1px; padding-left: 11px; }
.grp2 .updown { margin-left: 3px; }
.bw32 { width: 33px; height: 13px; }
.bw32.r { margin-left: 5px; }
.foot-tools { display: flex; align-items: center; height: 15px; margin-top: 1px; padding-left: 1px; }
.btn.sq { width: 16px; height: 15px; display: flex; align-items: center; justify-content: center; }
.s1 { margin-left: 66px; } .s2 { margin-left: 4px; }
.fl { width: 13px; height: 13px; display: block; }

/* operator canvas */
.col-m { width: 535px; height: 499px; margin-right: 10px; display: flex; flex-direction: column; flex: none; }
.canvas { flex: 1; background: #dcdcdc; position: relative; }
.ctl { height: 14px; margin-top: 2px; display: flex; align-items: center; padding-left: 2px; }
.chip { height: 12px; width: 18px; background: #d2d2d2; border: 0; text-align: center; }
.chip.on { background: #f1cb68; }
.chip.bad { width: 29px; margin-left: 4px; background: #ee1c1c; color: #f6dada; }
.chip:nth-child(3) { width: 22px; margin-left: 3px; }
.ctl-in { width: 439px; height: 12px; margin-left: 2px; background: #e9e9e9; border: 1px solid; border-color: #666 #f4f4f4 #f4f4f4 #666; }
.bang { width: 11px; height: 13px; margin-left: 3px; }
.pnode { position: absolute; top: 17px; width: 17px; height: 18px; background: #a5a0e6; border: 1px solid #1c1c50; border-radius: 4px; }
.pl { left: 0; box-shadow: -1px 0 0 #c8e8c0; }
.pr { left: 518px; }
.node { position: absolute; background: #f0ae32; border: 1px solid #2a2a30; border-radius: 5px; }
.node::after { content: ""; position: absolute; right: -2px; top: 6px; width: 3px; height: 8px; background: #b7e0a0; }
.pin::before { content: ""; position: absolute; left: -2px; top: 6px; width: 3px; height: 8px; background: #b7e0a0; }
.nh { font-size: 9px; height: 15px; line-height: 15px; letter-spacing: .15px; color: #2a2a20; }
.nh.wh { background: #fff; margin: 2px 0 0 0; height: 11px; line-height: 11px; padding-left: 5px; }
.n-sc { left: 192px; top: 62px; width: 115px; height: 148px; font: 700 6px/9.080px "Liberation Sans", sans-serif; color: #35301a; letter-spacing: .1px; }
.n-sc .nh { font-weight: 400; padding-left: 5px; margin-top: 1px; letter-spacing: .2px; font-family: "Liberation Sans", sans-serif; }
.sc-cols { display: flex; padding: 4px 0 0 3px; }
.sc-cols > div:first-child { width: 40px; }
.sc-list { white-space: nowrap; }
.n-joint { left: 203px; top: 236px; width: 72px; height: 58px; font: 700 6px/9px "Liberation Sans", sans-serif; }
.n-joint .nh { padding-left: 5px; font-weight: 400; font-size: 8.600px; margin-top: 1px; margin-bottom: 1px; }
.nr { display: flex; height: 9px; padding-left: 2px; letter-spacing: .1px; white-space: nowrap; }
.nr .y { width: 45px; background: #ffef1c; border-radius: 2px 0 0 2px; padding-left: 1px; margin-right: 5px; }
.nr .p { padding-left: 1px; }
.nr .short { width: 20px; margin-left: -2px; }
.n-count { left: 194px; top: 319px; width: 93px; height: 48px; font: 700 6px/9.300px "Liberation Sans", sans-serif; }
.n-count .nh { font-weight: 400; font-size: 8.600px; }
.cr { padding-left: 3px; display: flex; white-space: nowrap; }
.cr:nth-child(2) { margin-top: 4px; }
.cr span:first-child { width: 33px; }
.n-data { left: 202px; top: 387px; width: 75px; height: 30px; font: 700 6px/9px "Liberation Sans", sans-serif; }
.n-data .nh { padding-left: 2px; font-size: 8.600px; font-weight: 400; margin-top: 1px; margin-bottom: 2px; }
.target { position: absolute; left: 168px; top: 336px; width: 28px; height: 28px; }
.cursor { position: absolute; left: 199px; top: 386px; width: 10px; height: 14px; }

/* command panel */
.col-r { width: 108px; height: 126px; border-right: 1px solid #eee; border-bottom: 1px solid #eee; display: flex; flex-direction: column; flex: none; }
.roll-h { width: 104px; height: 11px; background: #a9a9a9; border: 1px solid; border-color: #555 #222 #222 #555; text-align: center; line-height: 9px; margin-left: 1px; flex: none; color: #222; position: relative; }
.roll-h.dark { width: 106px; background: #b3b3b3; border-color: #111; margin-top: 6px; }
.cmd-icons { display: flex; gap: 1px; padding-left: 7px; margin-top: 2px; height: 19px; flex: none; }
.ci { width: 17px; height: 17px; padding: 1px; background: #c8c8c8; box-shadow: inset 0 0 0 1px #b0b0b0; flex: none; }
.ci.on { background: #f4cf78; }
.dd-create { width: 92px; height: 13px; margin: 1px 0 0 6px; background: #c4c4c4; }
.btn.all { width: 52px; height: 13px; margin: 1px 0 0 1px; background: #c8c8c8; flex: none; }
.coll { display: flex; align-items: center; padding-left: 2px; height: 13px; flex: none; }
.coll > span { width: 30px; }
.sel-dd { width: 72px; height: 12px; background: #0a246a; color: #d8dff0; }
.which { margin: 5px 0 0 2px; height: 10px; flex: none; }
.radios { display: flex; margin: 4px 0 0 7px; }
.radios label { display: flex; align-items: center; gap: 5px; width: 36px; }
.radios label:nth-child(2) { width: 30px; }
.rd { width: 6px; height: 6px; border-radius: 50%; background: #ececec; border: 1px solid #777; display: block; flex: none; }
.rd.chk { background: #222; box-shadow: 0 0 0 1px #eee inset; }

/* timeline */
.slider { height: 11px; flex: none; display: flex; align-items: center; padding-left: 1px; border-top: 1px solid #8a8a8a; border-bottom: 1px solid #b4b4b4; }
.sbtn { width: 9px; height: 9px; background: #d0d0d0; border: 0; font-size: 6px; line-height: 9px; }
.thumb { width: 80px; height: 9px; margin: 0 1px; background: #c4c4c4; border: 1px solid; border-color: #eee #333 #333 #eee; text-align: center; line-height: 8px; }
.ruler { height: 19px; flex: none; display: flex; border-bottom: 1px solid #9c9c9c; }
.mon { width: 14px; height: 14px; margin: 2px 0 0 7px; flex: none; }
.ruler-main { margin-left: 13px; width: 1190px; position: relative; }
.cur { position: absolute; left: -2px; top: 1px; width: 5px; height: 15px; background: #8aa0b8; border: 1px solid #567; border-radius: 1px; }
.ticks { height: 9px; margin-top: 1px; width: 1181px; background: repeating-linear-gradient(90deg, #8c8c8c 0 1px, transparent 1px 4.905px); }
.nums { display: grid; grid-template-columns: repeat(24, 49.050px); margin-left: 24.500px; text-align: center; font-size: 7px; color: #333; line-height: 8px; }

/* status */
.status { height: 31px; flex: none; display: flex; padding-left: 1px; overflow: hidden; }
.scripts { width: 64px; margin-right: 4px; flex: none; font: 7.500px/14px "Liberation Mono", monospace; letter-spacing: .3px; text-align: center; padding-top: 1px; }
.sc1 { height: 14px; background: #e0c8c8; border: 1px solid #999; line-height: 12px; }
.sc2 { height: 14px; background: #fff; margin-top: 1px; line-height: 13px; }
.stat { width: 890px; flex: none; padding-top: 1px; }
.stat-row { display: flex; align-items: center; height: 14px; }
.r2 { margin-top: 2px; }
.field { height: 14px; line-height: 12px; padding-left: 3px; background: #c8c8c8; border: 1px solid; border-color: #7a7a7a #eee #eee #7a7a7a; flex: none; white-space: nowrap; }
.grow { flex: 1; }
.xyz { width: 11px; text-align: center; flex: none; }
.coord { width: 38px; height: 12px; background: #cfcfcf; border: 1px solid; border-color: #777 #ddd #ddd #777; flex: none; margin-right: 2px; }
.gridv { width: 63px; margin-left: 3px; }
.lock { width: 15px; height: 14px; margin-left: 3px; flex: none; }
.keybtn { width: 28px; height: 28px; margin: 1px 0 0 2px; flex: none; display: flex; align-items: center; justify-content: center; }
.keyi { width: 20px; height: 10px; display: block; }
.akey { width: 106px; margin-left: 2px; padding-top: 1px; flex: none; }
.ak-row { display: flex; align-items: center; height: 14px; margin-bottom: 2px; }
.btn.ab { width: 31px; height: 13px; flex: none; }
.ak-dd { width: 73px; height: 13px; margin-left: 2px; }
.btn.kf { width: 57px; height: 13px; margin-left: 2px; background: #c8c8c8; flex: none; }
.trans { width: 80px; margin-left: 7px; flex: none; padding-top: 1px; }
.tr-row { display: flex; align-items: center; height: 15px; }
.frame { width: 40px; height: 12px; background: #d8d8d8; border: 1px solid; border-color: #777 #eee #eee #777; padding-left: 2px; margin-left: 2px; line-height: 10px; flex: none; }
.spin { width: 8px; text-align: center; font-family: "DejaVu Sans", sans-serif; }
.nav { display: grid; grid-template-columns: repeat(4, 15px); grid-auto-rows: 15px; padding-top: 1px; }

/* overlays */
.net { position: absolute; left: 856px; top: 2px; width: 172px; height: 26px; background: rgba(205, 215, 215, .62); border-radius: 4px; display: flex; align-items: center; font-size: 11px; color: #a3adad; padding-left: 4px; }
.net-logo { width: 20px; height: 20px; margin-right: 6px; opacity: .9; flex: none; }
.ar-g { color: #8fc48f; width: 20px; font-family: "DejaVu Sans", sans-serif; }
.ar-o { color: #e6c890; width: 18px; margin-left: 8px; text-align: center; font-family: "DejaVu Sans", sans-serif; }
.net-e { width: 22px; height: 22px; margin-left: 2px; flex: none; }
.subtitle { position: absolute; left: 402px; top: 697px; white-space: nowrap; font: 700 34.300px/46px "Noto Sans CJK SC", sans-serif; color: #fff; -webkit-text-stroke: 5px #151515; paint-order: stroke fill; text-shadow: 0 0 2px #777; }
.wm { position: absolute; left: 621px; top: 742px; white-space: nowrap; font: 13px/15px "Noto Sans CJK SC", sans-serif; color: #f0f0f0; }
.wm span { font: 11.400px/15px "Liberation Mono", monospace; }
```
